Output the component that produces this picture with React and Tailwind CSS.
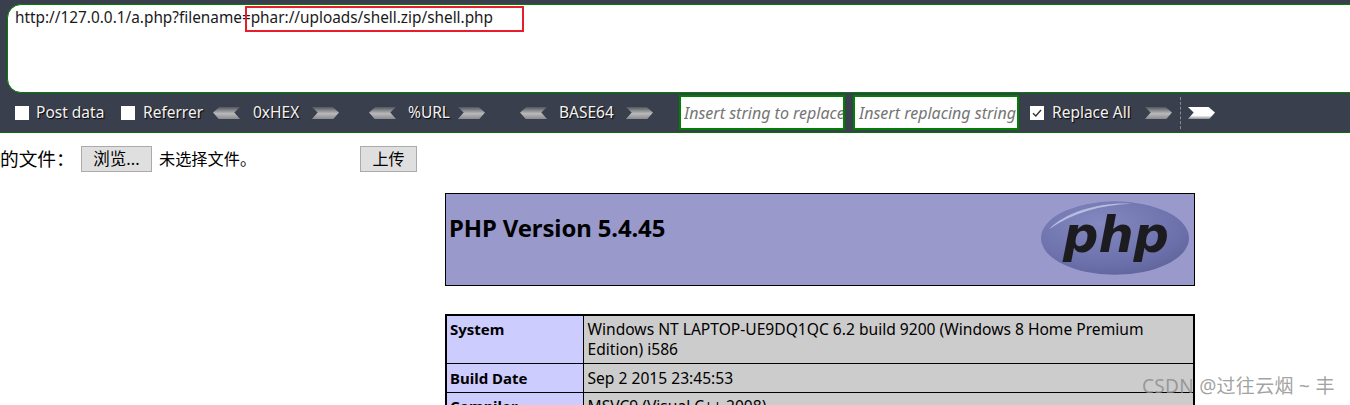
function Chevron({ dir = "right", id, light = false }) {
  const pts = dir === "right" ? "0,0 29,0 38,7 30,15 0,15 8,7" : "38,0 9,0 0,7 8,15 38,15 30,7";
  return (
    <svg width="27" height="12" viewBox="0 0 38 15" preserveAspectRatio="none" className="shrink-0">
      <defs>
        <linearGradient id={id} x1="0" y1="0" x2="0" y2="1">
          {light ? <stop offset="0" stopColor="#ffffff" /> : <stop offset="0" stopColor="#53565f" />}
          {light ? <stop offset="0.7" stopColor="#ffffff" /> : <stop offset="0.55" stopColor="#b9b9b9" />}
          {light ? <stop offset="1" stopColor="#8d8f96" /> : <stop offset="1" stopColor="#8a8b90" />}
        </linearGradient>
      </defs>
      <polygon points={pts} fill={`url(#${id})`} />
    </svg>
  );
}

function Check({ checked, ml }) {
  return (
    <span className={`w-[14px] h-[14px] bg-white shrink-0 flex items-center justify-center ${ml}`}>
      {checked && (
        <svg width="12" height="12" viewBox="0 0 12 12">
          <path d="M2 6.2 L4.8 9 L10 3" fill="none" stroke="#333" strokeWidth="1.4" />
        </svg>
      )}
    </span>
  );
}

const shadow = "[text-shadow:1px_1px_1px_#000]";

function Logo() {
  return (
    <svg width="150" height="80" viewBox="0 0 150 80" className="shrink-0">
      <defs>
        <radialGradient id="lg" cx="0.4" cy="0.3" r="0.8">
          <stop offset="0" stopColor="#8589c0" />
          <stop offset="0.7" stopColor="#6b70ab" />
          <stop offset="1" stopColor="#5d6196" />
        </radialGradient>
      </defs>
      <ellipse cx="74" cy="39" rx="74" ry="37.5" fill="url(#lg)" />
      <path d="M8 30 C25 12 60 2 90 4 C60 5 30 14 8 30Z" fill="#b9bce0" />
      <text x="22" y="53" fontFamily="'DejaVu Sans',sans-serif" fontWeight="700" fontStyle="italic" fontSize="50" fill="#1c1c20" textLength="106" lengthAdjust="spacingAndGlyphs">php</text>
    </svg>
  );
}

export default function App() {
  return (
    <div className="relative w-[1350px] h-[405px] overflow-hidden bg-white font-['Noto_Sans','Noto_Sans_CJK_SC',sans-serif] text-black">
      <div className="bg-[#3a3f4e] h-[133px] pt-[4px] border-b border-[#0b6b0b] flex flex-col">
        <div className="ml-[7px] w-[1360px] h-[89px] bg-white border-[1.5px] border-[#008000] rounded-[14px] pl-[7px] pt-[2px] text-[15.35px] leading-[20px] text-[#1a1a1a]">
          http://127.0.0.1/a.php?filename=phar://uploads/shell.zip/shell.php
        </div>
        <div className="flex items-center h-[39px] text-[15.5px] text-[#f2f2f2] whitespace-nowrap">
          <Check ml="ml-[15px]" />
          <span className={`ml-[7px] w-[85px] ${shadow}`}>Post data</span>
          <Check />
          <span className={`ml-[8px] w-[70px] ${shadow}`}>Referrer</span>
          <Chevron dir="left" id="a1" />
          <span className={`ml-[13px] w-[59px] ${shadow}`}>0xHEX</span>
          <Chevron id="a2" />
          <span className="w-[30px]" />
          <Chevron dir="left" id="a3" />
          <span className={`ml-[12px] w-[50px] ${shadow}`}>%URL</span>
          <Chevron id="a4" />
          <span className="w-[35px]" />
          <Chevron dir="left" id="a5" />
          <span className={`ml-[12px] w-[67px] ${shadow}`}>BASE64</span>
          <Chevron id="a6" />
          <input readOnly placeholder="Insert string to replace" className="ml-[26px] w-[166px] h-[35px] bg-white border-2 border-[#008000] pl-[3px] italic text-[16px] placeholder:text-[#757575] outline-none" />
          <input readOnly placeholder="Insert replacing string" className="ml-[8px] w-[166px] h-[35px] bg-white border-2 border-[#008000] pl-[4px] italic text-[16px] placeholder:text-[#757575] outline-none" />
          <Check checked ml="ml-[11px]" />
          <span className={`ml-[8px] w-[93px] ${shadow}`}>Replace All</span>
          <Chevron id="a7" />
          <span className="ml-[8px] h-[32px] border-l border-dashed border-[#8a8d96]" />
          <span className="w-[7px]" />
          <Chevron id="a8" light />
        </div>
      </div>

      <div className="flex items-center h-[26px] mt-[13px] text-[16px] whitespace-nowrap">
        <span className="w-[81px] text-[18.7px]">的文件：</span>
        <span className="w-[71px] h-[26px] bg-[#dfdfdf] border border-[#ababab] flex items-center justify-center text-[16.5px]">浏览...</span>
        <span className="ml-[7px] w-[201px] text-[16.2px]">未选择文件。</span>
        <span className="w-[57px] h-[26px] bg-[#dfdfdf] border border-[#ababab] flex items-center justify-center">上传</span>
      </div>

      <div className="ml-[445px] w-[750px] mt-[21px] h-[93px] bg-[#9999cc] border border-black flex justify-between pl-[3px] pr-[4px] pt-[3px]">
        <h1 className="font-bold text-[23.9px] leading-[62px] h-[62px] tracking-[-0.1px]">PHP Version 5.4.45</h1>
        <div className="mt-[2px] -mr-[1px] scale-y-[0.98]"><Logo /></div>
      </div>

      <table className="ml-[445px] mt-[28px] w-[750px] border-collapse border-2 border-black text-[15.6px] leading-[20px] table-fixed">
        <tbody>
          <tr>
            <td className="w-[137px] bg-[#ccccff] border border-black font-bold text-[15px] px-[3px] pt-[3px] pb-[4px] align-top h-[48px]">System</td>
            <td className="bg-[#cccccc] border border-black px-[4px] pt-[3px] pb-[4px] align-top">Windows NT LAPTOP-UE9DQ1QC 6.2 build 9200 (Windows 8 Home Premium Edition) i586</td>
          </tr>
          <tr>
            <td className="bg-[#ccccff] border border-black font-bold text-[15px] px-[3px] pt-[3px] pb-[4px] h-[29px]">Build Date</td>
            <td className="bg-[#cccccc] border border-black px-[4px] pt-[3px] pb-[4px]">Sep 2 2015 23:45:53</td>
          </tr>
          <tr>
            <td className="bg-[#ccccff] border border-black font-bold text-[15px] px-[3px] pt-[3px] pb-[4px]">Compiler</td>
            <td className="bg-[#cccccc] border border-black px-[4px] pt-[3px] pb-[4px]">MSVC9 (Visual C++ 2008)</td>
          </tr>
        </tbody>
      </table>

      <div className="absolute left-[245px] top-[6px] w-[279px] h-[26px] border-2 border-[#e81c2c]" />
      <div className="absolute left-[1142px] top-[374px] text-[19px] leading-[24px] tracking-[0.3px] text-[#8a8a8a]/80 whitespace-nowrap">CSDN @过往云烟 ~ 丰</div>
    </div>
  );
}
